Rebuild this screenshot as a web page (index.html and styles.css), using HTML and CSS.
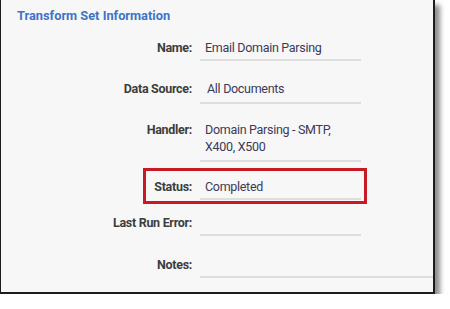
FILE: index.html
```html
<!DOCTYPE html>
<html>
<head>
<title>Transform Set Information</title>
<meta name="viewport" content="width=device-width, initial-scale=1.0">
<link rel="stylesheet" href="styles.css">
</head>
<body>

<div class="info-panel">
  <h2 class="panel-title">Transform Set Information</h2>

  <div class="form-row">
    <span class="field-label">Name:</span>
    <div class="field-value">Email Domain Parsing</div>
  </div>

  <div class="form-row">
    <span class="field-label">Data Source:</span>
    <div class="field-value field-select">All Documents</div>
  </div>

  <div class="form-row">
    <span class="field-label">Handler:</span>
    <div class="field-value field-multi">Domain Parsing - SMTP,<br>X400, X500</div>
  </div>

  <div class="form-row highlighted">
    <span class="field-label">Status:</span>
    <div class="field-value">Completed</div>
  </div>

  <div class="form-row error-row">
    <span class="field-label">Last Run Error:</span>
    <div class="field-value"></div>
  </div>

  <div class="form-row wide">
    <span class="field-label">Notes:</span>
    <div class="field-value"></div>
  </div>
</div>

</body>
</html>
```

FILE: styles.css
```css
/* --- page --- */
body {
  font-family: 'Roboto', 'Liberation Sans', sans-serif;
  background-color: #ffffff;
  margin: 0;
  padding: 0;
}

.info-panel {
  width: 435px;
  height: 294px;
  box-sizing: border-box;
  background-color: #f7f7f7;
  border-left: 1px solid #1c1c1c;
  border-right: 2px solid #1c1c1c;
  border-bottom: 2px solid #1c1c1c;
  box-shadow: 5px 5px 5px rgba(0, 0, 0, 0.45);
  padding-top: 7px;
  display: flex;
  flex-direction: column;
  gap: 12.5px;
}

.panel-title {
  margin: 0 0 -2px 16px;
  font-size: 12.8px;
  line-height: 17px;
  font-weight: 700;
  color: #3c74c8;
}

/* --- rows --- */
.form-row {
  display: grid;
  grid-template-columns: 191px 161px;
  column-gap: 8px;
  align-items: baseline;
  font-size: 12.5px;
  line-height: 17px;
  letter-spacing: -0.3px;
  position: relative;
}

.form-row.wide {
  grid-template-columns: 191px 1fr;
  margin-top: 4px;
}

.form-row.error-row {
  margin-top: -3px;
}

.field-label {
  text-align: right;
  font-weight: 700;
  color: #3d3d3d;
}

.field-value {
  padding: 4px 4px 3px 5px;
  border-bottom: 2px solid #dedede;
  color: #3b3a58;
}

/* keep a line box in empty fields so the label lines up */
.field-value:empty::before {
  content: "\00a0";
}

.field-select {
  padding-top: 7px;
  padding-bottom: 5px;
  padding-left: 7px;
}

.field-multi {
  line-height: 17.5px;
  padding-bottom: 4px;
}

/* red callout round the status row */
.highlighted::after {
  content: "";
  position: absolute;
  left: 142px;
  width: 218px;
  top: -6px;
  bottom: -4px;
  border: 3px solid #c81a22;
}
```
